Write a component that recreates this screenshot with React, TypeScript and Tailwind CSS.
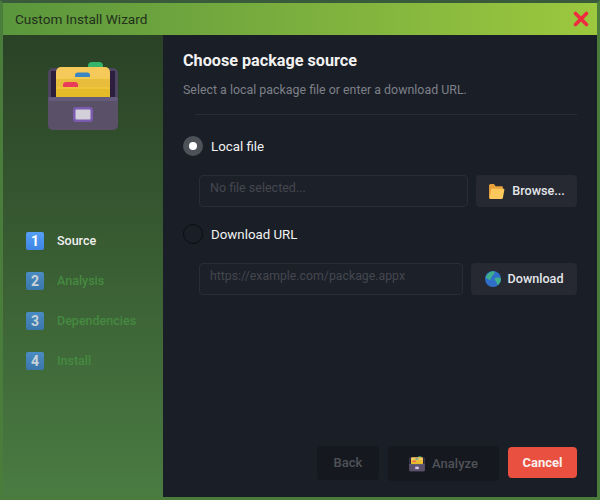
import { X } from "lucide-react";

function Cabinet({ size }: { size: number }) {
  return (
    <svg width={size} height={size} viewBox="0 0 72 72" className="block">
      <rect x="41" y="1" width="15" height="12" rx="4" fill="#34b56a" />
      <rect x="1" y="7" width="70" height="62" rx="5" fill="#4d4560" />
      <rect x="4" y="10" width="64" height="30" fill="#2b1f3d" />
      <rect x="9" y="6" width="54" height="34" rx="5" fill="#f5c95a" />
      <rect x="28" y="11.500" width="15" height="8" rx="3" fill="#3b85c4" />
      <rect x="9" y="16" width="54" height="24" rx="4" fill="#f4cb52" />
      <rect x="9" y="18" width="54" height="22" fill="#e8bd3c" />
      <rect x="16" y="21" width="15" height="8" rx="3" fill="#ea3b5a" />
      <rect x="9" y="26" width="54" height="14" rx="3" fill="#f1c53a" />
      <rect x="9" y="28" width="54" height="12" fill="#e6bb2a" />
      <rect x="1" y="36" width="70" height="33" rx="5" fill="#5a5068" />
      <rect x="1" y="36" width="70" height="4" rx="2" fill="#635a7c" />
      <rect x="26" y="46" width="20" height="15" rx="3" fill="#7a5bb0" />
      <rect x="28.500" y="48.500" width="15" height="10" rx="1" fill="#d4d0da" />
    </svg>
  );
}

function FolderIcon() {
  return (
    <svg width="17" height="17" viewBox="0 0 16 16" className="block">
      <path d="M1 2.500C1 1.700 1.600 1 2.400 1h3.200l1.600 2H13c.6 0 1 .4 1 1v9.500c0 .8-.6 1.500-1.400 1.500H2.400C1.600 15 1 14.300 1 13.500Z" fill="#e9a23b" />
      <path d="M3.200 5.500h11.300c.6 0 1 .5.900 1.100l-1.400 7.300c-.1.600-.6 1.100-1.300 1.100H2.400C1.600 15 1.300 14.500 1.400 13.900Z" fill="#fdc95c" />
    </svg>
  );
}

function GlobeIcon() {
  return (
    <svg width="16" height="16" viewBox="0 0 16 16" className="block">
      <circle cx="8" cy="8" r="8" fill="#2f6fc9" />
      <path d="M2 4C4 1 7 0 9 0.300C10.500 2 9 3.500 7.500 4.500C7 6.500 5 7 5.500 9C3.500 9 2 7 0.600 6.500C0.900 5.500 1.400 4.800 2 4Z" fill="#3fae8a" />
      <path d="M10 7C12 6 14.500 6.500 16 7.500C16 10 15 12 13 14C11.500 13 12 11 10.500 10C10 9 9.500 8 10 7Z" fill="#3fae8a" />
    </svg>
  );
}

function Step({ n, label, active }: { n: number; label: string; active?: boolean }) {
  return (
    <div className="flex h-[18px] items-center">
      <div
        className={
          active
            ? "flex h-[18px] w-[18px] items-center justify-center rounded-[2px] bg-gradient-to-b from-[#55a0f5] to-[#3f84e4] text-[14px] font-bold text-white"
            : "flex h-[18px] w-[18px] items-center justify-center rounded-[2px] bg-gradient-to-b from-[#4a8cc4] to-[#3a76aa] text-[14px] font-bold text-[#c9d3d8]"
        }
      >
        {n}
      </div>
      <span className={active ? "ml-[13px] text-[12.500px] font-medium text-[#f0f0f0]" : "ml-[13px] text-[12.500px] font-medium text-[#458a40]"}>
        {label}
      </span>
    </div>
  );
}

export default function App() {
  return (
    <div
      className="flex h-[500px] w-[600px] flex-col overflow-hidden border-x-[3px] border-b-[3px] border-t-[3px] border-[#4a7d3c] border-t-[#3a5a3c]"
      style={{ fontFamily: "Roboto, 'Noto Sans', sans-serif" }}
    >
      <div className="flex h-[32px] shrink-0 items-center justify-between bg-gradient-to-r from-[#5a963c] to-[#9cc83e] pl-[12px] pr-[5px]">
        <span className="text-[13.600px] text-[#22301c]">Custom Install Wizard</span>
        <X size={22} strokeWidth={4} className="text-[#ee2b3f]" />
      </div>

      <div className="flex min-h-0 flex-1">
        <aside className="flex w-[160px] shrink-0 flex-col items-start bg-gradient-to-b from-[#2a4226] to-[#4a7c42]">
          <div className="ml-[44px] mt-[26px] blur-[0.4px]">
            <Cabinet size={72} />
          </div>
          <div className="ml-[23px] mt-[99px] flex flex-col gap-[22px]">
            <Step n={1} label="Source" active />
            <Step n={2} label="Analysis" />
            <Step n={3} label="Dependencies" />
            <Step n={4} label="Install" />
          </div>
        </aside>

        <main className="flex min-w-0 flex-1 flex-col bg-[#1a1e27] pl-[20px] pr-[20px]">
          <h1 className="mt-[15px] h-[22px] text-[16.200px] font-bold leading-[22px] text-[#f2f2f2]">Choose package source</h1>
          <p className="mt-[10px] h-[16px] text-[12.400px] leading-[16px] text-[#7d8088]">
            Select a local package file or enter a download URL.
          </p>
          <div className="ml-[12px] mt-[16px] h-px bg-[#2a2d36]" />

          <div className="mt-[21px] flex h-[20px] items-center">
            <div className="flex h-[20px] w-[20px] items-center justify-center rounded-full bg-[#4d5259]">
              <div className="h-[8px] w-[8px] rounded-full bg-white" />
            </div>
            <span className="ml-[8px] pt-px text-[13.300px] text-[#f2f2f2]">Local file</span>
          </div>

          <div className="ml-[16px] mt-[19px] flex h-[32px] gap-[8px]">
            <div className="flex flex-1 items-center rounded-[4px] border border-[#2a2d36] bg-[#1c2029] px-[10px] pb-[6px] text-[12.500px] text-[#44474f]">
              No file selected...
            </div>
            <button className="flex w-[101px] items-center justify-center gap-[7px] rounded-[4px] bg-[#262932] text-[12.600px] font-medium text-[#e4e6ea]">
              <FolderIcon />
              Browse...
            </button>
          </div>

          <div className="mt-[17px] flex h-[20px] items-center">
            <div className="h-[20px] w-[20px] rounded-full border border-[#0c0d12] bg-[#1a1e27]" />
            <span className="ml-[8px] pt-px text-[13.300px] text-[#f2f2f2]">Download URL</span>
          </div>

          <div className="ml-[16px] mt-[19px] flex h-[32px] gap-[8px]">
            <div className="flex flex-1 items-center rounded-[4px] border border-[#2a2d36] bg-[#1c2029] px-[10px] pb-[6px] text-[12.300px] text-[#44474f]">
              https://example.com/package.appx
            </div>
            <button className="flex w-[106px] items-center justify-center gap-[7px] rounded-[4px] bg-[#262932] text-[12.600px] font-medium text-[#e4e6ea]">
              <GlobeIcon />
              Download
            </button>
          </div>

          <div className="mb-[16px] mt-auto flex items-start justify-end">
            <button className="h-[34px] w-[62px] rounded-[4px] bg-[#16181f] text-[13px] font-medium text-[#4f5258]">Back</button>
            <button className="ml-[9px] flex h-[35px] w-[111px] items-center justify-center gap-[7px] rounded-[4px] bg-[#16181f] text-[13px] font-medium text-[#4f5258]">
              <Cabinet size={16} />
              Analyze
            </button>
            <button className="ml-[9px] mt-px h-[31px] w-[69px] rounded-[4px] bg-[#e9503f] text-[13px] font-bold text-[#f8f0ee]">Cancel</button>
          </div>
        </main>
      </div>
    </div>
  );
}
